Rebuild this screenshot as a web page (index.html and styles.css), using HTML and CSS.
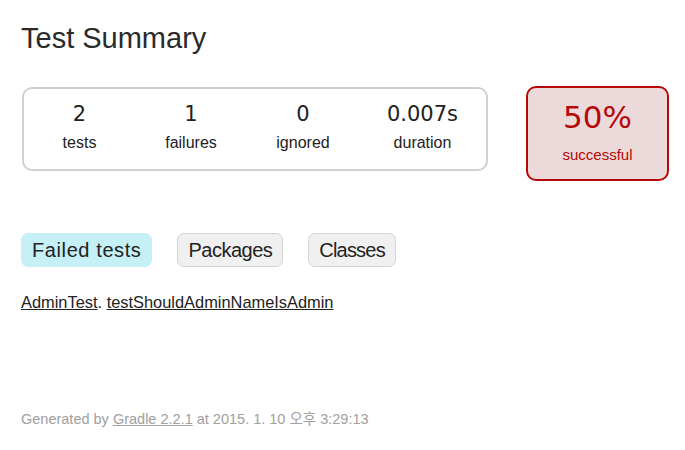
FILE: index.html
```html
<!DOCTYPE html>
<html>
<head>
<meta charset="utf-8">
<title>Test results - Test Summary</title>
<link rel="stylesheet" href="styles.css">
</head>
<body>
<div class="content">
  <h1 class="title">Test Summary</h1>
  <div class="summary">
    <div class="summary-group">
      <div class="info-box">
        <div class="counter">2</div>
        <p class="label">tests</p>
      </div>
      <div class="info-box">
        <div class="counter">1</div>
        <p class="label">failures</p>
      </div>
      <div class="info-box">
        <div class="counter">0</div>
        <p class="label">ignored</p>
      </div>
      <div class="info-box">
        <div class="counter">0.007s</div>
        <p class="label">duration</p>
      </div>
    </div>
    <div class="success-rate">
      <div class="percent">50%</div>
      <p class="label">successful</p>
    </div>
  </div>
  <ul class="tab-links">
    <li class="tab selected tab-failed"><a href="#">Failed tests</a></li>
    <li class="tab tab-packages"><a href="#">Packages</a></li>
    <li class="tab tab-classes"><a href="#">Classes</a></li>
  </ul>
  <p class="failed-list"><a href="#">AdminTest</a>. <a href="#">testShouldAdminNameIsAdmin</a></p>
  <p class="footer">Generated by <a href="#">Gradle 2.2.1</a> at 2015. 1. 10 오후 3:29:13</p>
</div>
</body>
</html>
```
FILE: styles.css
```css
html, body {
  margin: 0;
  padding: 0;
  background: #ffffff;
}
body {
  font-family: "Liberation Sans", "Noto Sans CJK KR", sans-serif;
  color: #222222;
}
.content {
  padding: 22px 21px 0 21px;
  display: flex;
  flex-direction: column;
  align-items: flex-start;
}
.title {
  margin: 0;
  font-size: 29px;
  line-height: 32px;
  font-weight: normal;
  color: #2a2a2a;
}
.summary {
  margin-top: 33px;
  margin-left: 1px;
  display: flex;
  align-items: flex-start;
}
.summary-group {
  display: grid;
  grid-template-columns: 111px 112px 112px 127px;
  border: 2px solid #d0d0d0;
  border-radius: 10px;
}
.info-box {
  padding: 13px 0 17px 0;
  text-align: center;
}
.counter {
  font-family: "DejaVu Sans", sans-serif;
  font-size: 21px;
  line-height: 24px;
  margin-bottom: 8px;
  color: #222222;
}
.label {
  margin: 0;
  font-size: 16px;
  line-height: 18px;
}
.success-rate {
  margin-left: 38px;
  margin-top: -1px;
  width: 139px;
  padding: 11px 0 15px 0;
  text-align: center;
  border: 2px solid #b60808;
  border-radius: 10px;
  background-color: #ecdada;
  color: #b60808;
}
.percent {
  font-family: "DejaVu Sans", sans-serif;
  font-size: 31px;
  line-height: 36px;
  margin-bottom: 11px;
}
.success-rate .label {
  font-size: 15px;
}
.tab-links {
  list-style: none;
  margin: 52px 0 0 0;
  padding: 0;
  display: flex;
}
.tab {
  padding: 5px 10px;
  margin-right: 25px;
  border: 1px solid #d4d4d4;
  border-radius: 7px;
  background-color: #f0f0f0;
}
.tab.selected {
  background-color: #c5f0f5;
  border-color: #c5f0f5;
}
.tab a {
  display: block;
  font-size: 20px;
  line-height: 22px;
  color: #222222;
  text-decoration: none;
}
.tab-failed a {
  letter-spacing: 0.6px;
}
.tab-packages a {
  letter-spacing: -0.5px;
}
.tab-classes a {
  letter-spacing: -0.8px;
}
.failed-list {
  margin: 25px 0 0 0;
  font-size: 16.4px;
  line-height: 20px;
}
.failed-list a {
  color: #222222;
  text-decoration: underline;
}
.footer {
  margin: 99px 0 0 0;
  font-size: 14.5px;
  line-height: 16px;
  color: #a0a0a0;
  white-space: nowrap;
}
.footer a {
  color: #a0a0a0;
  text-decoration: underline;
}
```
